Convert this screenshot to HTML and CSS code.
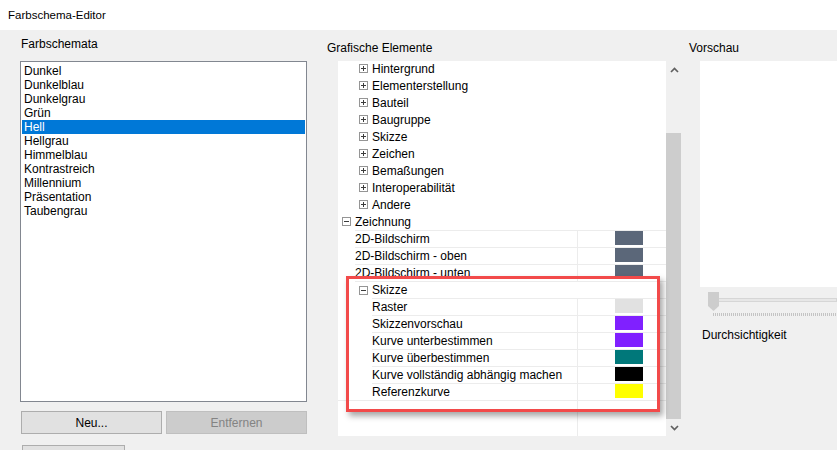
FILE: index.html
```html
<!DOCTYPE html>
<html lang="de">
<head>
<meta charset="utf-8">
<title>Farbschema-Editor</title>
<link rel="stylesheet" href="styles.css">
</head>
<body>
<div class="titlebar">Farbschema-Editor</div>
<div class="main">
  <div class="col col-left">
    <div class="label label-left">Farbschemata</div>
    <ul class="listbox">
      <li>Dunkel</li>
      <li>Dunkelblau</li>
      <li>Dunkelgrau</li>
      <li>Grün</li>
      <li class="sel">Hell</li>
      <li>Hellgrau</li>
      <li>Himmelblau</li>
      <li>Kontrastreich</li>
      <li>Millennium</li>
      <li>Präsentation</li>
      <li>Taubengrau</li>
    </ul>
    <div class="btnrow">
      <button class="btn">Neu...</button>
      <button class="btn disabled">Entfernen</button>
    </div>
    <button class="btn btn3"></button>
  </div>

  <div class="col col-mid">
    <div class="label">Grafische Elemente</div>
    <div class="treewrap">
      <div class="tree">
        <div class="tree-rows">
          <div class="row cat"><svg class="exp" width="9" height="9" viewBox="0 0 9 9"><rect x="0.5" y="0.5" width="8" height="8" fill="#fff" stroke="#959595"/><path d="M2 4.5h5M4.5 2v5" stroke="#3c3c3c"/></svg><span class="txt">Hintergrund</span></div>
          <div class="row cat"><svg class="exp" width="9" height="9" viewBox="0 0 9 9"><rect x="0.5" y="0.5" width="8" height="8" fill="#fff" stroke="#959595"/><path d="M2 4.5h5M4.5 2v5" stroke="#3c3c3c"/></svg><span class="txt">Elementerstellung</span></div>
          <div class="row cat"><svg class="exp" width="9" height="9" viewBox="0 0 9 9"><rect x="0.5" y="0.5" width="8" height="8" fill="#fff" stroke="#959595"/><path d="M2 4.5h5M4.5 2v5" stroke="#3c3c3c"/></svg><span class="txt">Bauteil</span></div>
          <div class="row cat"><svg class="exp" width="9" height="9" viewBox="0 0 9 9"><rect x="0.5" y="0.5" width="8" height="8" fill="#fff" stroke="#959595"/><path d="M2 4.5h5M4.5 2v5" stroke="#3c3c3c"/></svg><span class="txt">Baugruppe</span></div>
          <div class="row cat"><svg class="exp" width="9" height="9" viewBox="0 0 9 9"><rect x="0.5" y="0.5" width="8" height="8" fill="#fff" stroke="#959595"/><path d="M2 4.5h5M4.5 2v5" stroke="#3c3c3c"/></svg><span class="txt">Skizze</span></div>
          <div class="row cat"><svg class="exp" width="9" height="9" viewBox="0 0 9 9"><rect x="0.5" y="0.5" width="8" height="8" fill="#fff" stroke="#959595"/><path d="M2 4.5h5M4.5 2v5" stroke="#3c3c3c"/></svg><span class="txt">Zeichen</span></div>
          <div class="row cat"><svg class="exp" width="9" height="9" viewBox="0 0 9 9"><rect x="0.5" y="0.5" width="8" height="8" fill="#fff" stroke="#959595"/><path d="M2 4.5h5M4.5 2v5" stroke="#3c3c3c"/></svg><span class="txt">Bemaßungen</span></div>
          <div class="row cat"><svg class="exp" width="9" height="9" viewBox="0 0 9 9"><rect x="0.5" y="0.5" width="8" height="8" fill="#fff" stroke="#959595"/><path d="M2 4.5h5M4.5 2v5" stroke="#3c3c3c"/></svg><span class="txt">Interoperabilität</span></div>
          <div class="row cat"><svg class="exp" width="9" height="9" viewBox="0 0 9 9"><rect x="0.5" y="0.5" width="8" height="8" fill="#fff" stroke="#959595"/><path d="M2 4.5h5M4.5 2v5" stroke="#3c3c3c"/></svg><span class="txt">Andere</span></div>

          <div class="row grp0"><svg class="exp" width="9" height="9" viewBox="0 0 9 9"><rect x="0.5" y="0.5" width="8" height="8" fill="#fff" stroke="#959595"/><path d="M2 4.5h5" stroke="#3c3c3c"/></svg><span class="txt">Zeichnung</span></div>
          <div class="row data lvl1"><span class="name">2D-Bildschirm</span><span class="val"><span class="sw sw-slate"></span></span></div>
          <div class="row data lvl1"><span class="name">2D-Bildschirm - oben</span><span class="val"><span class="sw sw-slate"></span></span></div>
          <div class="row data lvl1"><span class="name">2D-Bildschirm - unten</span><span class="val"><span class="sw sw-slate"></span></span></div>

          <div class="row grp1"><svg class="exp" width="9" height="9" viewBox="0 0 9 9"><rect x="0.5" y="0.5" width="8" height="8" fill="#fff" stroke="#959595"/><path d="M2 4.5h5" stroke="#3c3c3c"/></svg><span class="txt">Skizze</span></div>
          <div class="row data lvl2"><span class="name">Raster</span><span class="val"><span class="sw sw-grid"></span></span></div>
          <div class="row data lvl2"><span class="name">Skizzenvorschau</span><span class="val"><span class="sw sw-violet"></span></span></div>
          <div class="row data lvl2"><span class="name">Kurve unterbestimmen</span><span class="val"><span class="sw sw-violet"></span></span></div>
          <div class="row data lvl2"><span class="name">Kurve überbestimmen</span><span class="val"><span class="sw sw-teal"></span></span></div>
          <div class="row data lvl2"><span class="name">Kurve vollständig abhängig machen</span><span class="val"><span class="sw sw-black"></span></span></div>
          <div class="row data lvl2"><span class="name">Referenzkurve</span><span class="val"><span class="sw sw-yellow"></span></span></div>
        </div>
        <div class="filler"><span class="name"></span><span class="val"></span></div>
      </div>
      <div class="vscroll">
        <div class="arrow"><svg width="9" height="6" viewBox="0 0 9 6"><polyline points="1,5 4.5,1.5 8,5" fill="none" stroke="#606060" stroke-width="1.7"/></svg></div>
        <div class="track"><div class="thumb"></div></div>
        <div class="arrow"><svg width="9" height="6" viewBox="0 0 9 6"><polyline points="1,1 4.5,4.5 8,1" fill="none" stroke="#606060" stroke-width="1.7"/></svg></div>
      </div>
      <div class="callout"></div>
    </div>
  </div>

  <div class="col col-right">
    <div class="label">Vorschau</div>
    <div class="preview"></div>
    <div class="slider">
      <div class="slider-track"></div>
      <svg class="slider-thumb" width="11" height="19" viewBox="0 0 11 19"><polygon points="0,0 11,0 11,14 5.5,19 0,14" fill="#cdcdcd"/></svg>
      <div class="ticks"></div>
    </div>
    <div class="slider-label">Durchsichtigkeit</div>
  </div>
</div>
</body>
</html>
```

FILE: styles.css
```css
* { box-sizing: border-box; }
html, body {
  margin: 0;
  padding: 0;
  width: 837px;
  height: 450px;
  overflow: hidden;
  background: #f0f0f0;
  font-family: "Liberation Sans", Arial, sans-serif;
  font-size: 12px;
  color: #000;
}
.titlebar {
  height: 30px;
  background: #fff;
  padding-left: 8px;
  line-height: 30px;
  font-size: 11.5px;
}
.main {
  display: flex;
  padding-left: 20px;
  height: 420px;
  overflow: hidden;
}
.col { display: flex; flex-direction: column; }
.col > * { flex-shrink: 0; }
.col-left { width: 287px; }
.col-mid { width: 354px; margin-left: 20px; }
.col-right { flex: 1; margin-left: 8px; min-width: 0; }

.label {
  height: 31px;
  padding-top: 11px;
  line-height: 14px;
}
.label-left { padding-top: 7px; padding-left: 1px; }

.listbox {
  list-style: none;
  margin: 0;
  padding: 1px;
  height: 341px;
  background: #fff;
  border: 1px solid #828790;
}
.listbox li {
  height: 14px;
  line-height: 14px;
  padding-left: 2px;
}
.listbox li:first-child { margin-top: 1px; }
.listbox li.sel { background: #0078d7; color: #fff; }

.btnrow {
  display: flex;
  gap: 4px;
  margin-top: 9px;
  padding-left: 1px;
}
.btn {
  font: inherit;
  height: 23px;
  width: 141px;
  padding: 0;
  background: #e1e1e1;
  border: 1px solid #adadad;
  color: #000;
}
.btn.disabled { background: #cccccc; border-color: #bfbfbf; color: #838383; }
.btn3 { margin-top: 11px; margin-left: 2px; width: 103px; }

.treewrap {
  position: relative;
  display: flex;
  margin-left: 11px;
  height: 375px;
}
.tree {
  width: 328px;
  background: #fff;
  display: flex;
  flex-direction: column;
  overflow: hidden;
}
.tree-rows { margin-top: -1px; }
.row {
  height: 17px;
  display: flex;
  align-items: center;
  white-space: nowrap;
}
.exp { display: block; flex: none; }
.txt { margin-left: 4px; }
.row.cat { padding-left: 21px; }
.row.grp0 { padding-left: 4px; }
.row.grp1 { margin-left: 17px; padding-left: 4px; border-top: 1px solid #ececec; }
.row.data {
  border-top: 1px solid #ececec;
  align-items: stretch;
}
.row.data .name { flex: 1; display: flex; align-items: center; }
.lvl1 { margin-left: 17px; }
.lvl2 { margin-left: 34px; }
.val {
  width: 89px;
  flex: none;
  border-left: 1px solid #ececec;
  padding-left: 37px;
}
.sw { display: block; width: 28px; height: 14px; }
.sw-slate { background: #5b6779; }
.sw-grid { background: #e1e1e1; }
.sw-violet { background: #8020ff; }
.sw-teal { background: #00787a; }
.sw-black { background: #000; }
.sw-yellow { background: #ffff00; }

.filler {
  flex: 1;
  display: flex;
  border-top: 1px solid #ececec;
}
.filler .name { flex: 1; }

.vscroll {
  width: 15px;
  display: flex;
  flex-direction: column;
  background: #f0f0f0;
}
.arrow {
  height: 17px;
  display: flex;
  align-items: center;
  justify-content: center;
}
.arrow svg { display: block; margin-left: 1px; }
.track { flex: 1; display: flex; flex-direction: column; }
.thumb { flex: 1; margin-top: 55px; background: #cdcdcd; }

.callout {
  position: absolute;
  left: 8px;
  top: 215px;
  width: 314px;
  height: 136px;
  border: 3px solid #f24a4a;
  box-shadow: 3px 4px 6px rgba(0, 0, 0, 0.35);
}

.preview {
  margin-left: 11px;
  height: 226px;
  background: #fff;
}
.slider {
  position: relative;
  margin-left: 19px;
  margin-top: 5px;
  height: 26px;
}
.slider-track {
  margin-left: 3px;
  margin-top: 6px;
  height: 4px;
  background: #e7e7e7;
  border: 1px solid #d6d6d6;
}
.slider-thumb { position: absolute; left: 0; top: 0; display: block; }
.ticks {
  margin-left: 5px;
  margin-top: 11px;
  height: 3px;
  background: repeating-linear-gradient(to right, #c4c4c4 0, #c4c4c4 1px, transparent 1px, transparent 2px);
}
.slider-label {
  margin-left: 13px;
  margin-top: 10px;
  line-height: 14px;
}
```
